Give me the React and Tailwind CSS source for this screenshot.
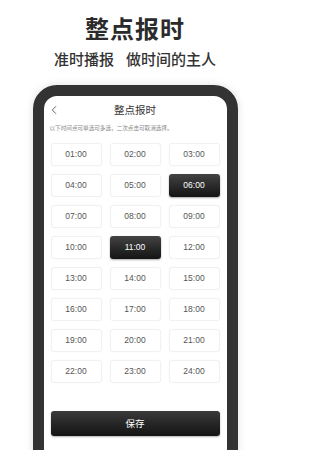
import {ChevronLeft} from "lucide-react";

const hours = Array.from({length: 24}, (_, i) => `${String(i + 1).padStart(2, "0")}:00`);
const picked = ["06:00", "11:00"];

const HourCell = ({label, active}) => (
    <div
        className={active
            ? "h-[23px] flex items-center justify-center rounded-[3px] bg-gradient-to-b from-[#444] to-[#141414] text-white shadow-[0_1px_2px_rgba(0,0,0,0.35)]"
            : "h-[23px] flex items-center justify-center rounded-[3px] bg-white border border-[#f1f1f1] text-[#555] shadow-[0_0_2px_rgba(0,0,0,0.04)]"}
    >
        <span className="text-[8.5px] font-['Liberation_Sans',sans-serif]">{label}</span>
    </div>
);

export default function App() {
    return (
        <div className="w-[270px] h-[450px] overflow-hidden bg-white font-['Noto_Sans_CJK_SC',sans-serif]">
            <h1 className="pt-[13px] text-center text-[24px] leading-[30px] font-bold text-[#2b2b2b] tracking-[1px]">
                整点报时
            </h1>
            <p className="mt-[7px] text-center text-[15px] leading-[18px] font-medium text-[#333]">
                准时播报<span className="inline-block w-[12px]"></span>做时间的主人
            </p>

            <div className="mt-[17px] mx-auto w-[205px] h-[420px] rounded-[24px] border-[11px] border-[#333] bg-white shadow-[0_0_8px_rgba(0,0,0,0.12)] overflow-hidden">
                <div className="relative h-[28px] flex items-center justify-center">
                    <ChevronLeft className="absolute left-[3px] top-[7px] w-[14px] h-[14px] text-[#333]" strokeWidth={1.3}/>
                    <span className="text-[10.5px] font-normal text-[#333]">整点报时</span>
                </div>
                <p className="px-[6px] text-[5.6px] leading-[8px] text-[#888] whitespace-nowrap">
                    以下时间点可单选可多选，二次点击可取消选择。
                </p>

                <div className="mt-[11px] px-[7px] grid grid-cols-3 gap-x-[8px] gap-y-[8px]">
                    {hours.map((h) => (
                        <HourCell key={h} label={h} active={picked.includes(h)}/>
                    ))}
                </div>

                <div className="mt-[25px] mx-[7px]">
                    <button className="w-full h-[25px] rounded-[3px] bg-gradient-to-b from-[#3a3a3a] to-[#141414] text-white text-[9.5px] shadow-[0_1px_2px_rgba(0,0,0,0.3)]">
                        保存
                    </button>
                </div>
            </div>
        </div>
    );
}
